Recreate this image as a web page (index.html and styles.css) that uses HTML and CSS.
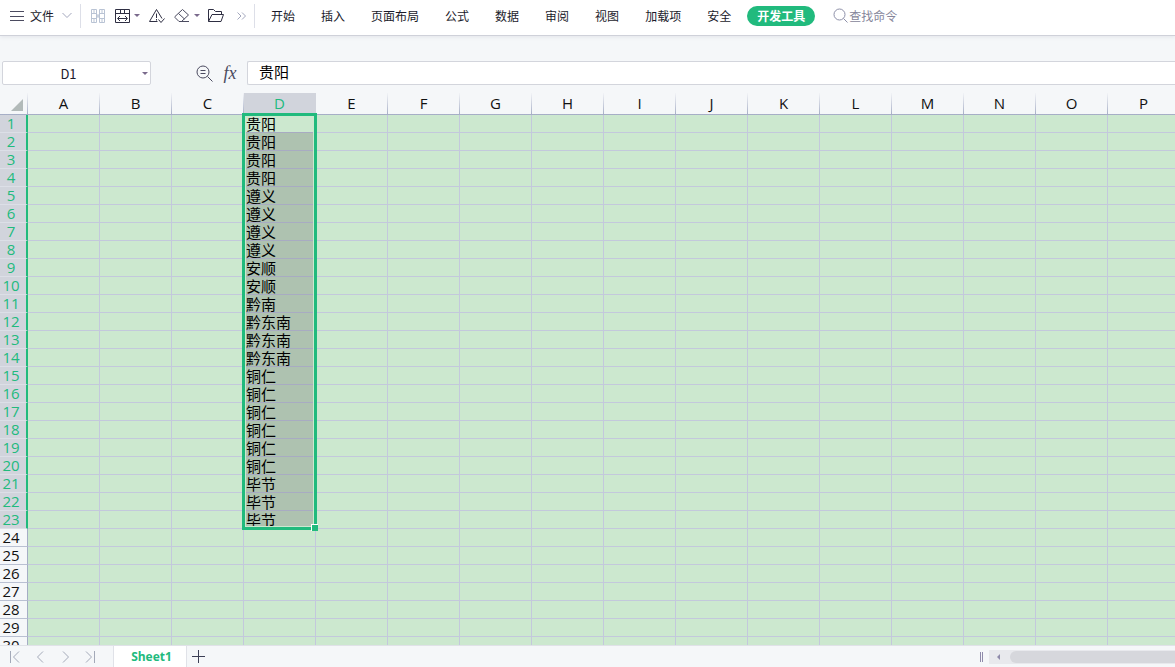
FILE: index.html
```html
<!DOCTYPE html>
<html lang="zh-CN">
<head>
  <meta charset="UTF-8">
  <meta name="viewport" content="width=device-width, initial-scale=1">
  <title>Sheet1</title>
  <link rel="stylesheet" href="styles.css">
</head>
<body>

  <!-- Menu bar -->
  <header class="menubar">
    <button type="button" class="file-menu">
      <svg width="14" height="12" viewBox="0 0 14 12" class="ink"><path d="M0 1.500h14M0 6.500h14M0 10.500h14"/></svg>
      <span>文件</span>
      <svg width="10" height="7" viewBox="0 0 10 7" class="pale"><path d="M.5 1L5 5.500 9.500 1"/></svg>
    </button>

    <div class="tools">
      <button type="button" aria-label="合并">
        <svg width="16" height="16" viewBox="0 0 16 16" class="faint"><path d="M1.500 1.500h5v13h-5zM9.500 1.500h5v13h-5zM1.500 5.500h5M1.500 10.500h5M9.500 5.500h5M9.500 10.500h5M4 1.500v4M4 10.500v4M12 1.500v4M12 10.500v4M6.500 6l2 2-2 2M9.500 6l-2 2 2 2"/></svg>
      </button>
      <button type="button" class="drop" aria-label="列宽">
        <svg width="17" height="16" viewBox="0 0 17 16" class="dark"><path d="M1.500 1.500h14v13h-14zM1.500 5.500h14M6.500 1.500v4M10.500 1.500v4M4 10.500h9M6 8l-2.500 2.500L6 13M11 8l2.500 2.500L11 13"/></svg>
        <i class="caret"></i>
      </button>
      <button type="button" aria-label="检查">
        <svg width="18" height="16" viewBox="0 0 18 16" class="dark"><path d="M9.500 13.500H1.500L8.500 1.500l5.500 9M8.500 5.500v4.500M8.500 11v1.500M10.500 11.500l2.500 3 3.500-4"/></svg>
      </button>
      <button type="button" class="drop" aria-label="清除">
        <svg width="17" height="16" viewBox="0 0 17 16" class="ink"><path d="M8.500 1.500l6 5.500-7 6.500H5L1 9.500 1 8.500zM4.500 5.500l6 5.500M6 13.500h9"/></svg>
        <i class="caret"></i>
      </button>
      <button type="button" aria-label="打开">
        <svg width="18" height="16" viewBox="0 0 18 16" class="dark"><path d="M.5 13.500v-12h5l2 2h6v3M.5 13.500l3.500-7h11.500l-2.500 7z"/></svg>
      </button>
      <button type="button" aria-label="更多">
        <svg width="10" height="8" viewBox="0 0 10 8" class="pale"><path d="M.5.5L4 4 .5 7.500M5 .5L8.500 4 5 7.500"/></svg>
      </button>
    </div>

    <nav class="tabs">
      <a href="#">开始</a>
      <a href="#">插入</a>
      <a href="#">页面布局</a>
      <a href="#">公式</a>
      <a href="#">数据</a>
      <a href="#">审阅</a>
      <a href="#">视图</a>
      <a href="#">加载项</a>
      <a href="#">安全</a>
      <a href="#" class="active">开发工具</a>
    </nav>

    <button type="button" class="search">
      <svg width="15" height="15" viewBox="0 0 15 15"><circle cx="6.500" cy="6.500" r="5.500"/><path d="M10.500 10.500l4 4"/></svg>
      <span>查找命令</span>
    </button>
  </header>

  <!-- Name box and formula bar -->
  <div class="formula-row">
    <div class="name-box">
      <input type="text" value="D1" aria-label="名称框">
      <i class="caret"></i>
    </div>
    <button type="button" class="lookup" aria-label="浏览">
      <svg width="17" height="17" viewBox="0 0 17 17" class="ink"><circle cx="7" cy="7" r="6"/><path d="M11.500 11.500l5 5M4.500 5.500h5M4.500 8.500h5"/></svg>
    </button>
    <button type="button" class="fx">fx</button>
    <input type="text" class="formula" value="贵阳" aria-label="编辑栏">
  </div>

  <!-- Cells, filled in by sheet.js -->
  <main class="grid">
    <table class="sheet">
      <thead><tr id="columns"></tr></thead>
      <tbody id="rows"></tbody>
    </table>
  </main>

  <!-- Sheet tabs and horizontal scroll bar -->
  <footer class="bottombar">
    <div class="sheet-nav">
      <button type="button" aria-label="第一个"><svg width="10" height="12" viewBox="0 0 10 12"><path d="M.5 0v12M9 .5L3.500 6 9 11.500"/></svg></button>
      <button type="button" aria-label="上一个"><svg width="10" height="12" viewBox="0 0 10 12"><path d="M8 .5L2.500 6 8 11.500"/></svg></button>
      <button type="button" aria-label="下一个"><svg width="10" height="12" viewBox="0 0 10 12"><path d="M3 .5L8.500 6 3 11.500"/></svg></button>
      <button type="button" aria-label="最后一个"><svg width="10" height="12" viewBox="0 0 10 12"><path d="M9.500 0v12M1 .5L6.500 6 1 11.500"/></svg></button>
    </div>
    <button type="button" class="sheet-tab">Sheet1</button>
    <button type="button" class="add" aria-label="新建工作表"><svg width="13" height="13" viewBox="0 0 13 13"><path d="M6.500 0v13M0 6.500h13"/></svg></button>
    <div class="splitter"></div>
    <div class="scrollbar">
      <i class="arrow"></i>
      <div class="thumb"></div>
    </div>
  </footer>

  <script src="sheet.js"></script>
</body>
</html>
```

FILE: styles.css
```css
* {
  box-sizing: border-box;
}
body {
  margin: 0;
  height: 100vh;
  display: flex;
  flex-direction: column;
  overflow: hidden;
  background: #f5f7f9;
  color: #1b1b2b;
  font: 12px "Noto Sans CJK SC", sans-serif;
}
button {
  display: flex;
  align-items: center;
  padding: 0;
  border: none;
  background: none;
  color: inherit;
  font: inherit;
  cursor: pointer;
}
input {
  border: none;
  background: none;
  color: inherit;
  outline: none;
}
svg {
  display: block;
  flex: none;
  fill: none;
  stroke: #8d8fa8;
}
.ink {
  stroke: #4b4b60;
}
.dark {
  stroke: #2e2e42;
}
.pale {
  stroke: #a3a7bd;
}
.faint {
  stroke: #b9c3d4;
}
.caret {
  border: 3px solid transparent;
  border-top-color: #7a6a8c;
  border-bottom: none;
}

/* Menu bar */
.menubar {
  display: flex;
  align-items: center;
  flex: none;
  height: 36px;
  padding-bottom: 4px;
  background: #fff;
  border-bottom: 1px solid #cfd1d9;
  box-shadow: 0 1px 4px #e2e4ea;
  white-space: nowrap;
}
.file-menu {
  gap: 6px;
  height: 24px;
  padding: 0 8px 0 10px;
  border-right: 1px solid #dddfe8;
}
.file-menu span {
  margin-right: 2px;
}
.tools {
  display: flex;
  align-items: center;
  height: 24px;
  gap: 8px;
  padding: 0 7px 0 9px;
  border-right: 1px solid #dddfe8;
}
.drop {
  gap: 3px;
}
.tools button:last-child {
  margin-left: 3px;
}
.tabs {
  display: flex;
  gap: 6px;
  margin-left: 6px;
}
.tabs a {
  padding: 0 10px;
  border-radius: 10px;
  line-height: 20px;
  color: inherit;
  text-decoration: none;
}
.tabs .active {
  background: #21ba7d;
  color: #fff;
  font-weight: bold;
}
.search {
  gap: 1px;
  margin-left: 18px;
  color: #85859a;
}

/* Formula row */
.formula-row {
  display: flex;
  align-items: center;
  flex: none;
  margin-top: 25px;
  height: 24px;
}
.name-box {
  display: flex;
  align-items: center;
  width: 149px;
  height: 24px;
  margin-left: 2px;
  padding-right: 2px;
  border: 1px solid #d3d5dc;
  border-radius: 2px;
  background: #fff;
}
.name-box input {
  flex: 1;
  min-width: 0;
  padding: 0 8px 0 0;
  font: 13px "Noto Sans CJK SC", sans-serif;
  text-align: center;
}
.lookup {
  margin-left: 45px;
}
.fx {
  width: 34px;
  justify-content: center;
  color: #4b4b60;
  font: italic 18px "Liberation Serif", serif;
}
.formula {
  flex: 1;
  min-width: 0;
  height: 24px;
  padding: 0 11px 4px;
  border: 1px solid #d3d5dc;
  border-right: none;
  border-radius: 2px 0 0 2px;
  background: #fff;
  color: #000;
  font: 15px/18px "Noto Sans CJK SC", sans-serif;
}

/* Grid */
.grid {
  flex: 1;
  min-height: 0;
  margin-top: 8px;
  overflow: hidden;
  background: #cce8cf;
}
.sheet {
  width: 1180px;
  table-layout: fixed;
  border-collapse: separate;
  border-spacing: 0;
}
.sheet th,
.sheet td {
  height: 18px;
  padding: 0;
  line-height: 17px;
}
.sheet th {
  background: #f5f7f9;
  color: #111;
  font: 15px/17px "Open Sans", "Noto Sans", sans-serif;
}
.sheet thead th {
  width: 72px;
  height: 22px;
  border-bottom: 1px solid #a5adc5;
  border-right: 1px solid;
  border-image: linear-gradient(#f5f7f9, #a5adc5) 1;
  line-height: 21px;
}
.sheet thead .corner {
  width: 28px;
}
.corner svg {
  margin: 2px 0 0 11px;
  fill: #b2bab9;
  stroke: none;
}
.sheet tbody th {
  padding-right: 5px;
  border-bottom: 1px solid #b9c0d2;
  border-right: 1px solid #a5adc5;
}
.sheet thead .picked {
  border-image: none;
  border-color: #d1d4dc #d1d4dc #a5adc5;
  background: #d1d4dc;
  color: #21ba7d;
}
.sheet tbody .picked {
  padding-right: 4px;
  border-right: 2px solid #21ba7d;
  border-bottom-color: #dcdfe7;
  background: #d1d4dc;
  color: #21ba7d;
}
.sheet td {
  border-right: 1px solid #c3c8dc;
  border-bottom: 1px solid #c3c8dc;
  color: #000;
  font: 15px/17px "Noto Sans CJK SC", sans-serif;
  white-space: nowrap;
}
.sheet .filled {
  padding-left: 2px;
  border-bottom-color: #a8abc2;
  background: #aec2b0;
}
.sheet .current {
  position: relative;
  background: #cce8cf;
}
.selection {
  position: absolute;
  top: -2px;
  left: -2px;
  width: 75px;
  height: 417px;
  border: 3px solid #21ba7d;
  box-shadow: inset 0 0 0 1px #cce8cf;
}
.selection::after {
  content: "";
  position: absolute;
  right: -4px;
  bottom: -4px;
  width: 6px;
  height: 6px;
  border: solid #fff;
  border-width: 1px 0 0 1px;
  background: #21ba7d;
}

/* Bottom bar */
.bottombar {
  display: flex;
  flex: none;
  align-items: center;
  height: 22px;
  border-top: 1px solid #e0e2e8;
}
.sheet-nav {
  display: flex;
  gap: 15px;
  width: 113px;
  padding-left: 10px;
}
.sheet-nav svg {
  stroke: #a3a9b8;
}
.sheet-tab {
  justify-content: center;
  width: 74px;
  height: 22px;
  padding-left: 3px;
  border: 1px solid #e0e2e8;
  border-top: none;
  background: #fff;
  color: #21ba7d;
  font: bold 12px "Open Sans", "Noto Sans", sans-serif;
}
.add {
  margin-left: 5px;
}
.add svg {
  stroke: #3c3f55;
}
.splitter {
  width: 3px;
  height: 10px;
  margin-left: auto;
  border: solid #8f8bab;
  border-width: 0 1px;
}
.scrollbar {
  display: flex;
  align-items: center;
  width: 186px;
  height: 14px;
  margin-left: 6px;
  background: #e8e9ed;
}
.arrow {
  margin: 0 10px 0 8px;
  border: 3px solid transparent;
  border-left: none;
  border-right-color: #8f8bab;
}
.thumb {
  flex: 1;
  height: 12px;
  border-radius: 6px 0 0 6px;
  background: #d6d7dc;
}
```

FILE: sheet.js
```js
const columnNames = 'ABCDEFGHIJKLMNOP'.split('');
const rowCount = 30;
const cities = [
  '贵阳', '贵阳', '贵阳', '贵阳',
  '遵义', '遵义', '遵义', '遵义',
  '安顺', '安顺',
  '黔南', '黔东南', '黔东南', '黔东南',
  '铜仁', '铜仁', '铜仁', '铜仁', '铜仁', '铜仁',
  '毕节', '毕节', '毕节'
];

// Column letters
const columns = document.getElementById('columns');
columns.innerHTML = '<th class="corner"><svg width="12" height="12" viewBox="0 0 12 12"><path d="M12 0v12H0z"/></svg></th>';
columnNames.forEach((name) => {
  const th = document.createElement('th');
  th.textContent = name;
  if (name === 'D') th.className = 'picked';
  columns.appendChild(th);
});

// Rows, with the city names in column D
const rows = document.getElementById('rows');
for (let i = 0; i < rowCount; i++) {
  const tr = document.createElement('tr');
  const th = document.createElement('th');
  th.textContent = i + 1;
  if (i < cities.length) th.className = 'picked';
  tr.appendChild(th);

  columnNames.forEach((name) => {
    const td = document.createElement('td');
    if (name === 'D' && i < cities.length) {
      td.textContent = cities[i];
      td.className = 'filled';
    }
    tr.appendChild(td);
  });
  rows.appendChild(tr);
}

// Selection frame hangs on the current cell
const current = document.querySelector('.filled');
const selection = document.createElement('div');
current.classList.add('current');
selection.className = 'selection';
current.appendChild(selection);
```
